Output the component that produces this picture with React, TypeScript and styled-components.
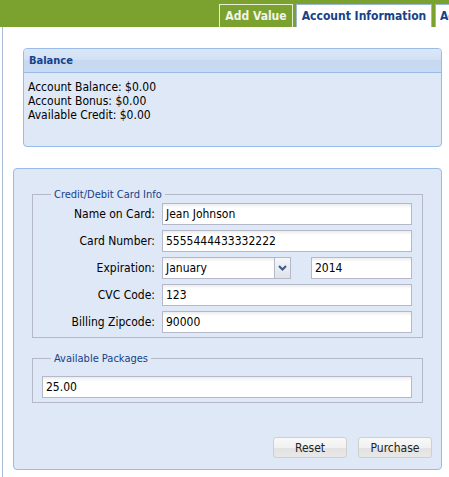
import styled, { createGlobalStyle } from "styled-components";

const Global = createGlobalStyle`
  html, body {
    margin: 0;
    padding: 0;
    background: #ffffff;
  }
  body {
    font-family: "DejaVu Sans Condensed", "DejaVu Sans", Tahoma, sans-serif;
    font-size: 12px;
    color: #000;
  }
`;

const Shell = styled.div`
  width: 449px;
  height: 477px;
  overflow: hidden;
`;

const TabBar = styled.div`
  height: 27px;
  background: #7ba22f;
  display: flex;
  align-items: flex-end;
  gap: 3px;
  padding-left: 219px;
  box-sizing: border-box;
  white-space: nowrap;
  overflow: hidden;
`;

const Tab = styled.div<{ $active?: boolean; $width: number }>`
  flex: none;
  width: ${(p) => p.$width}px;
  height: 23px;
  box-sizing: border-box;
  display: flex;
  align-items: center;
  justify-content: ${(p) => (p.$width > 200 ? "flex-start" : "center")};
  padding-left: ${(p) => (p.$width > 200 ? 4 : 0)}px;
  font-weight: bold;
  font-size: 12px;
  overflow: hidden;
  border: 1px solid ${(p) => (p.$active ? "#e6eed6" : "#9ab6d8")};
  border-bottom: none;
  background: ${(p) => (p.$active ? "#7ba22f" : "#ffffff")};
  color: ${(p) => (p.$active ? "#f2f4ea" : "#15428b")};
`;

const Body = styled.div`
  margin-left: 2px;
  border-left: 1px solid #a9bdd6;
  padding-top: 21px;
  height: 450px;
  box-sizing: border-box;
`;

const Panel = styled.div<{ $left: number; $height: number }>`
  margin: 0 7px 0 ${(p) => p.$left}px;
  height: ${(p) => p.$height}px;
  box-sizing: border-box;
  border: 1px solid #99bbe8;
  border-radius: 4px;
  background: #dfe8f6;
  overflow: hidden;
  display: flex;
  flex-direction: column;
`;

const PanelHeader = styled.div`
  height: 24px;
  box-sizing: border-box;
  border-bottom: 1px solid #99bbe8;
  background: linear-gradient(#dce8f7 0%, #d3e1f4 45%, #c6d9f1 50%, #c9dbf2 100%);
  padding: 0 5px;
  display: flex;
  align-items: center;
  font-size: 11px;
  font-weight: bold;
  color: #15428b;
`;

const PanelText = styled.div`
  padding: 7px 4px;
  line-height: 14px;
`;

const Spacer = styled.div`
  height: 21px;
`;

const FormBody = styled.div`
  padding: 19px 9px 0 18px;
  display: flex;
  flex-direction: column;
  flex: 1;
`;

const FieldSet = styled.fieldset<{ $top: number }>`
  margin: ${(p) => p.$top}px 9px 0 0;
  padding: 2px 10px 4px 9px;
  border: 1px solid #b5b8c8;
  display: flex;
  flex-direction: column;
  gap: 5px;
`;

const Legend = styled.legend`
  font-size: 11px;
  line-height: 13px;
  color: #15428b;
  padding: 0 3px;
  margin-left: 9px;
`;

const Row = styled.div`
  display: flex;
  align-items: center;
  height: 22px;
`;

const Label = styled.label`
  width: 113px;
  text-align: right;
  margin-right: 7px;
  white-space: nowrap;
`;

const Field = styled.div`
  flex: 1;
  height: 22px;
  box-sizing: border-box;
  border: 1px solid #b5b8c8;
  background: linear-gradient(#ececec 0px, #ffffff 4px, #ffffff 100%);
  padding: 0 3px;
  display: flex;
  align-items: center;
  white-space: nowrap;
  overflow: hidden;
`;

const Select = styled.div`
  width: 129px;
  height: 22px;
  display: flex;
  margin-right: 20px;
`;

const SelectText = styled(Field)`
  border-right: none;
`;

const Trigger = styled.div`
  width: 17px;
  height: 22px;
  box-sizing: border-box;
  border: 1px solid #b5b8c8;
  background: linear-gradient(#f4f6f8, #dfe3e8);
  display: flex;
  align-items: center;
  justify-content: center;
`;

const PackageSet = styled(FieldSet)`
  padding: 11px 10px 4px 9px;
`;

const Buttons = styled.div`
  margin-top: auto;
  margin-bottom: 11px;
  display: flex;
  justify-content: flex-end;
  gap: 11px;
`;

const Button = styled.div`
  width: 74px;
  height: 21px;
  box-sizing: border-box;
  border: 1px solid #cfcfcf;
  border-radius: 3px;
  background: linear-gradient(#f8f8f8 0%, #f1f1f1 50%, #e2e2e2 51%, #e8e8e8 100%);
  display: flex;
  align-items: center;
  justify-content: center;
  color: #222;
`;

const rows = [
  { label: "Name on Card:", value: "Jean Johnson" },
  { label: "Card Number:", value: "5555444433332222" },
];

const rows2 = [
  { label: "CVC Code:", value: "123" },
  { label: "Billing Zipcode:", value: "90000" },
];

export default function App() {
  return (
    <Shell>
      <Global />
      <TabBar>
        <Tab $active $width={74}>Add Value</Tab>
        <Tab $width={136}>Account Information</Tab>
        <Tab $width={220}>Account History</Tab>
      </TabBar>
      <Body>
        <Panel $left={20} $height={99}>
          <PanelHeader>Balance</PanelHeader>
          <PanelText>
            <div>Account Balance: $0.00</div>
            <div>Account Bonus: $0.00</div>
            <div>Available Credit: $0.00</div>
          </PanelText>
        </Panel>
        <Spacer />
        <Panel $left={10} $height={302}>
          <FormBody>
            <FieldSet $top={0}>
              <Legend>Credit/Debit Card Info</Legend>
              {rows.map((r) => (
                <Row key={r.label}>
                  <Label>{r.label}</Label>
                  <Field>{r.value}</Field>
                </Row>
              ))}
              <Row>
                <Label>Expiration:</Label>
                <Select>
                  <SelectText>January</SelectText>
                  <Trigger>
                    <svg width="9" height="6" viewBox="0 0 9 6">
                      <path d="M1 1 L4.5 4.5 L8 1" fill="none" stroke="#3d5a87" strokeWidth="2" />
                    </svg>
                  </Trigger>
                </Select>
                <Field>2014</Field>
              </Row>
              {rows2.map((r) => (
                <Row key={r.label}>
                  <Label>{r.label}</Label>
                  <Field>{r.value}</Field>
                </Row>
              ))}
            </FieldSet>
            <PackageSet $top={14}>
              <Legend>Available Packages</Legend>
              <Row>
                <Field>25.00</Field>
              </Row>
            </PackageSet>
            <Buttons>
              <Button>Reset</Button>
              <Button>Purchase</Button>
            </Buttons>
          </FormBody>
        </Panel>
      </Body>
    </Shell>
  );
}
